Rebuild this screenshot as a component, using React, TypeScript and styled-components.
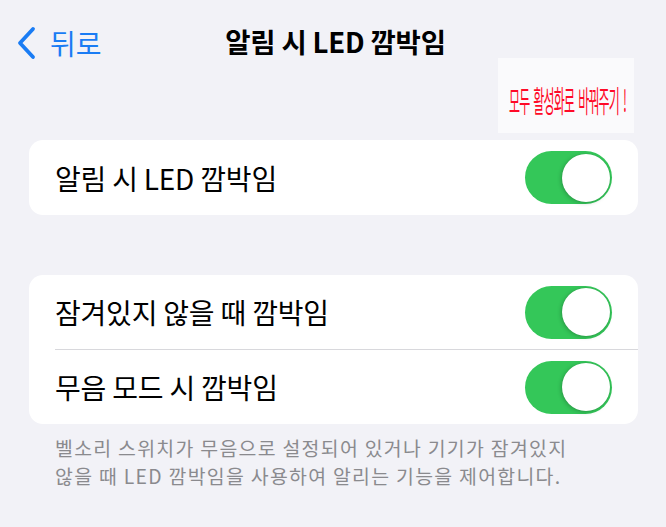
import React from "react";
import styled, { createGlobalStyle } from "styled-components";

const Global = createGlobalStyle`
  html, body { margin: 0; padding: 0; background: #f2f2f7; }
  body { font-family: "Noto Sans CJK KR", "Noto Sans", sans-serif; -webkit-font-smoothing: antialiased; }
`;

const Page = styled.div`
  position: relative;
  width: 666px;
  height: 527px;
  background: #f2f2f7;
  padding: 0 28px 0 29px;
  box-sizing: border-box;
  overflow: hidden;
`;

const NavBar = styled.div`
  position: relative;
  height: 84px;
  display: flex;
  align-items: center;
  justify-content: center;
`;

const BackButton = styled.div`
  position: absolute;
  left: -14px;
  top: 26px;
  display: flex;
  align-items: center;
  gap: 13px;
  color: #1a7cf4;
  font-size: 28px;
  line-height: 32px;
`;

const Title = styled.div`
  font-size: 27.5px;
  font-weight: 700;
  color: #000;
  letter-spacing: -0.2px;
  margin: -2px 0 0 4px;
`;

const Note = styled.div`
  position: absolute;
  left: 498px;
  top: 58px;
  width: 136px;
  height: 75px;
  background: #fafafc;
  display: flex;
  align-items: center;
  justify-content: center;
`;

const NoteText = styled.span`
  color: #ff0a28;
  font-size: 12px;
  letter-spacing: -0.8px;
  word-spacing: 2px;
  white-space: nowrap;
  transform: scale(1, 2.5);
  display: inline-block;
  margin: 6px 0 0 3px;
`;

const Card = styled.div<{ $mt: number }>`
  margin-top: ${(p) => p.$mt}px;
  background: #fff;
  border-radius: 14px;
  overflow: hidden;
`;

const Row = styled.div<{ $h: number }>`
  height: ${(p) => p.$h}px;
  display: flex;
  align-items: center;
  justify-content: space-between;
  padding: 0 26px;
`;

const Label = styled.span`
  font-size: 28px;
  color: #000;
  letter-spacing: -0.2px;
`;

const Separator = styled.div`
  height: 1px;
  margin-left: 26px;
  background: #d8d8dc;
`;

const Toggle = styled.div`
  width: 87px;
  height: 53px;
  border-radius: 27px;
  background: #34c759;
  display: flex;
  align-items: center;
  justify-content: flex-end;
  padding: 0 2px;
  box-sizing: border-box;
  flex-shrink: 0;
`;

const Knob = styled.div`
  width: 48px;
  height: 48px;
  border-radius: 50%;
  background: #fff;
  box-shadow: -1px 1px 4px rgba(0, 0, 0, 0.22), 0 0 0 0.5px rgba(0, 0, 0, 0.06);
`;

const Footer = styled.div`
  margin-top: 10px;
  padding-left: 26px;
  display: flex;
  flex-direction: column;
`;

const FooterLine = styled.span`
  font-size: 19.4px;
  line-height: 28px;
  color: #8a8a8e;
  letter-spacing: 1.3px;
  white-space: nowrap;
`;

const Switch = () => (
  <Toggle>
    <Knob />
  </Toggle>
);

export default function App() {
  return (
    <>
      <Global />
      <Page>
        <NavBar>
          <BackButton>
            <svg width="22" height="34" viewBox="0 0 22 34">
              <path d="M18 3 L5 17 L18 31" fill="none" stroke="#1a7cf4" strokeWidth="3.8" strokeLinecap="round" strokeLinejoin="round" />
            </svg>
            <span>뒤로</span>
          </BackButton>
          <Title>알림 시 LED 깜박임</Title>
        </NavBar>
        <Note>
          <NoteText>모두 활성화로 바꿔주기 !</NoteText>
        </Note>
        <Card $mt={56}>
          <Row $h={75}>
            <Label>알림 시 LED 깜박임</Label>
            <Switch />
          </Row>
        </Card>
        <Card $mt={60}>
          <Row $h={74}>
            <Label>잠겨있지 않을 때 깜박임</Label>
            <Switch />
          </Row>
          <Separator />
          <Row $h={74}>
            <Label>무음 모드 시 깜박임</Label>
            <Switch />
          </Row>
        </Card>
        <Footer>
          <FooterLine>벨소리 스위치가 무음으로 설정되어 있거나 기기가 잠겨있지</FooterLine>
          <FooterLine>않을 때 LED 깜박임을 사용하여 알리는 기능을 제어합니다.</FooterLine>
        </Footer>
      </Page>
    </>
  );
}
